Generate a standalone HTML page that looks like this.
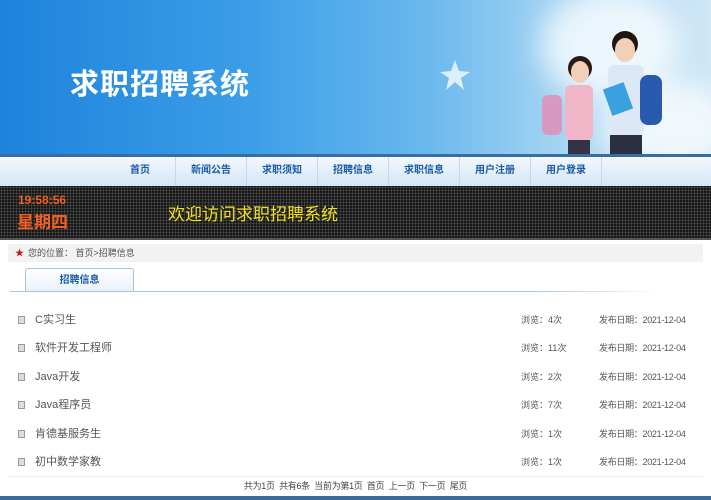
<!DOCTYPE html>
<html><head><meta charset="utf-8"><style>
*{margin:0;padding:0;box-sizing:border-box}
body{width:711px;height:500px;overflow:hidden;background:#fff;font-family:"Liberation Sans","Noto Sans CJK SC",sans-serif;position:relative}
.banner{position:absolute;left:0;top:0;width:711px;height:154px;background:linear-gradient(90deg,#1d82dc 0%,#3c9ee8 35%,#6ab8ee 60%,#a9d6f3 80%,#cfe7f6 100%);overflow:hidden}
.cloud{position:absolute;border-radius:50%;background:rgba(255,255,255,.75);filter:blur(14px)}
.title{position:absolute;left:70px;top:61px;font-size:29px;font-weight:bold;color:#fff;letter-spacing:1px;font-family:"Noto Sans CJK SC",sans-serif}
.line1{position:absolute;left:0;top:154px;width:711px;height:3px;background:#3a6d9c}
.nav{position:absolute;left:0;top:157px;width:711px;height:29px;background:linear-gradient(#f3f8fd,#d3e6f7)}
.nav span{position:absolute;top:0;width:71px;height:29px;line-height:28px;text-align:center;font-size:10px;color:#1a5aa8;font-weight:bold;border-right:1px solid #c5d9ec}
.led{position:absolute;left:0;top:186px;width:711px;height:54px;background-color:#0a0a0a;background-image:radial-gradient(circle,#4a4a4a 1px,transparent 1.4px);background-size:3px 3px;border-bottom:2px solid #555}
.time{position:absolute;left:18px;top:193px;font-size:12px;color:#f06020;font-weight:bold}
.week{position:absolute;left:17px;top:208px;font-size:17px;color:#f06020;font-weight:bold}
.wel{position:absolute;left:168px;top:200px;font-size:17px;color:#f0e020}
.crumb{position:absolute;left:8px;top:244px;width:695px;height:18px;background:#f2f2f2;font-size:9px;color:#555;line-height:18px;padding-left:20px}
.crumb i{position:absolute;left:7px;top:0;color:#d01010;font-style:normal;font-size:9px}
.tab{position:absolute;left:25px;top:268px;width:109px;height:24px;border:1px solid #a8c4dc;border-bottom:none;border-radius:3px 3px 0 0;background:linear-gradient(#fff,#e8f1f9);text-align:center;line-height:23px;font-size:10px;color:#1a5aa8;font-weight:bold}
.tabline{position:absolute;left:10px;top:291px;width:650px;height:1px;background:linear-gradient(90deg,#a8c4dc 80%,rgba(168,196,220,0))}
.row{position:absolute;left:0;width:711px;font-size:10px;color:#555;height:14px;line-height:14px}
.row .ic{position:absolute;left:18px;top:3px;width:7px;height:8px;border:1px solid #999;background:#ddd}
.row .t{position:absolute;left:35px;font-size:11px}
.row .v{position:absolute;left:521px;font-size:9px}
.row .d{position:absolute;left:599px;font-size:9px;letter-spacing:-0.3px}
.fline{position:absolute;left:8px;top:476px;width:695px;height:1px;background:#eee}
.pager{position:absolute;left:0;width:711px;top:479px;text-align:center;font-size:9px;color:#444;letter-spacing:-0.3px}
.bottom{position:absolute;left:0;top:496px;width:711px;height:4px;background:#3a6d9c}
</style></head><body>
<div class="banner">
<div class="cloud" style="left:540px;top:-10px;width:140px;height:110px"></div>
<div class="cloud" style="left:600px;top:80px;width:130px;height:90px"></div>
<div class="title">求职招聘系统</div>
<svg style="position:absolute;left:440px;top:60px" width="30" height="30"><polygon points="15,0 19,11 30,12 21,18 24,30 15,22 6,30 9,18 0,12 11,11" fill="#e8f4fc" opacity=".9"/></svg>
<svg style="position:absolute;left:530px;top:30px" width="170" height="125">
<circle cx="50" cy="38" r="12" fill="#2a1a14"/><ellipse cx="50" cy="42" rx="9" ry="11" fill="#f2d0b8"/>
<rect x="35" y="55" width="28" height="55" rx="6" fill="#f0b6c8"/><rect x="12" y="65" width="20" height="40" rx="6" fill="#d898c0"/>
<rect x="38" y="110" width="22" height="15" fill="#334"/>
<circle cx="95" cy="14" r="13" fill="#201510"/><ellipse cx="95" cy="20" rx="10" ry="12" fill="#f2d0b8"/>
<rect x="78" y="35" width="36" height="70" rx="6" fill="#dce8f6"/><rect x="110" y="45" width="22" height="50" rx="8" fill="#2a5ab0"/>
<rect x="77" y="55" width="22" height="28" fill="#3aa0e0" transform="rotate(-20 88 69)"/>
<rect x="80" y="105" width="32" height="20" fill="#2a3040"/>
</svg>
</div>
<div class="line1"></div>
<div class="nav">
<span style="left:105px">首页</span><span style="left:176px">新闻公告</span><span style="left:247px">求职须知</span><span style="left:318px">招聘信息</span><span style="left:389px">求职信息</span><span style="left:460px">用户注册</span><span style="left:531px">用户登录</span>
</div>
<div class="led"></div>
<div class="time">19:58:56</div>
<div class="week">星期四</div>
<div class="wel">欢迎访问求职招聘系统</div>
<div class="crumb"><i>★</i>您的位置： 首页&gt;招聘信息</div>
<div class="tab">招聘信息</div>
<div class="tabline"></div>
<div class="row" style="top:313px"><span class="ic"></span><span class="t">C实习生</span><span class="v">浏览：4次</span><span class="d">发布日期：2021-12-04</span></div>
<div class="row" style="top:341px"><span class="ic"></span><span class="t">软件开发工程师</span><span class="v">浏览：11次</span><span class="d">发布日期：2021-12-04</span></div>
<div class="row" style="top:370px"><span class="ic"></span><span class="t">Java开发</span><span class="v">浏览：2次</span><span class="d">发布日期：2021-12-04</span></div>
<div class="row" style="top:398px"><span class="ic"></span><span class="t">Java程序员</span><span class="v">浏览：7次</span><span class="d">发布日期：2021-12-04</span></div>
<div class="row" style="top:427px"><span class="ic"></span><span class="t">肯德基服务生</span><span class="v">浏览：1次</span><span class="d">发布日期：2021-12-04</span></div>
<div class="row" style="top:455px"><span class="ic"></span><span class="t">初中数学家教</span><span class="v">浏览：1次</span><span class="d">发布日期：2021-12-04</span></div>
<div class="fline"></div>
<div class="pager">共为1页 &nbsp;共有6条 &nbsp;当前为第1页 &nbsp;首页 &nbsp;上一页 &nbsp;下一页 &nbsp;尾页</div>
<div class="bottom"></div>
</body></html>
